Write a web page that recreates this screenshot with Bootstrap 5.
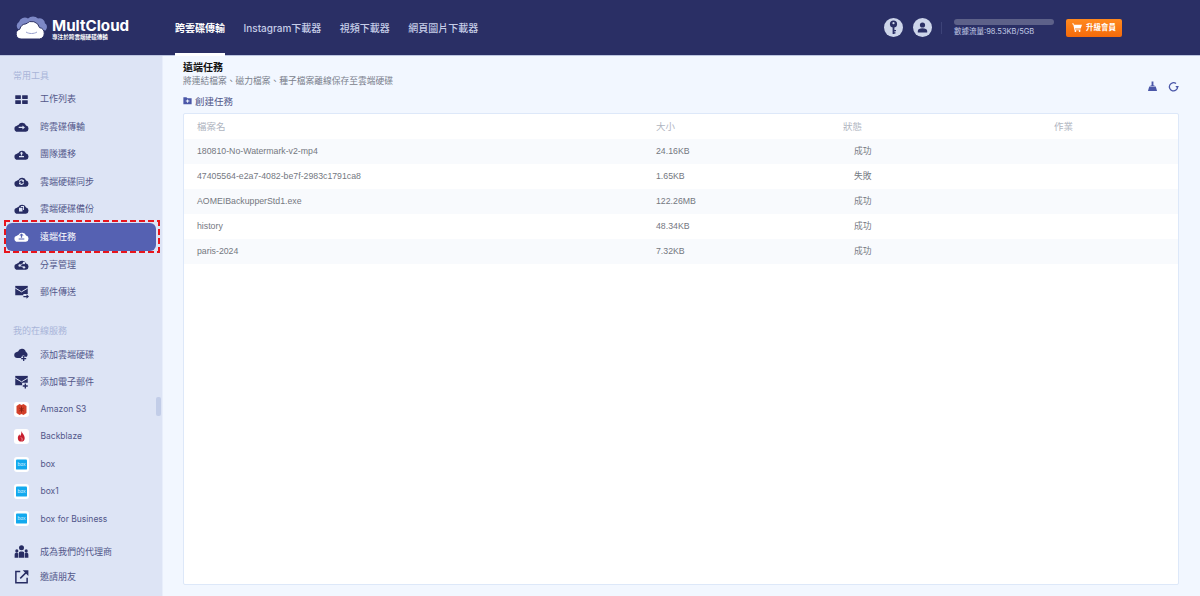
<!DOCTYPE html>
<html lang="zh-Hant">
<head>
<meta charset="utf-8">
<title>MultCloud</title>
<link href="https://cdn.jsdelivr.net/npm/bootstrap@5.3.0/dist/css/bootstrap.min.css" rel="stylesheet">
<style>
html,body{height:596px;overflow:hidden}
body{font-family:"Liberation Sans","Noto Sans CJK TC",sans-serif;font-size:9px;background:#f2f7ff;color:#555}
.mc-top{height:56px;background:#2a2f65;border-bottom:1px solid #bcc5e0;padding-left:15px}
.mc-logo{width:160px;gap:4px}
.mc-word{font-family:Inter,"Noto Sans CJK TC",sans-serif;font-weight:700;font-size:15.2px;line-height:17px;color:#fff;margin-top:1px}
.mc-sub{font-size:5.6px;line-height:6px;color:#fff;font-weight:700}
.mc-nav{gap:18.5px;height:56px;align-self:flex-start}
.mc-nav a{font-family:Inter,"Noto Sans CJK TC",sans-serif;font-size:10px;color:#c6cde8;text-decoration:none;height:56px;line-height:56px;font-weight:500;display:block}
.mc-nav a.cur{color:#fff;font-weight:700;border-bottom:3px solid #fff}
.mc-right{margin-left:auto;padding-right:78px;gap:0}
.mc-round{width:19px;height:19px;border-radius:50%;background:#cdd5ea;margin-right:10px;flex:none}
.mc-round.mc-r2{margin-right:9px}
.mc-sep{width:1px;height:12px;background:#3d4378;margin:0 12px 0 0}
.mc-track{width:100px;height:6px;border-radius:3px;background:#5d6189;margin-bottom:2px}
.mc-flow{font-family:Inter,"Noto Sans CJK TC",sans-serif;font-size:7.5px;line-height:10px;color:#c2cbe6;white-space:nowrap}
.mc-up{width:56px;height:18px;margin-left:12px;border-radius:2px;background:linear-gradient(#ff8a1f,#f56a0a);color:#fff;font-size:7.5px;font-weight:700;gap:4px;border:0;padding:0}
.mc-body{height:540px}
.mc-side{width:163px;flex:none;background:#dde4f5;position:relative;border-right:1px solid #e8eefb;padding-top:14px}
.mc-label{font-family:Inter,"Noto Sans CJK TC",sans-serif;font-size:9px;line-height:12px;color:#a9b5d9;padding-left:13px}
.mc-label.mc-l1{margin-bottom:3.5px}
.mc-label.mc-l2{margin-top:19px;margin-bottom:4px}
.mc-item{height:27.45px;padding-left:13.5px;color:#52578a;font-family:Inter,"Noto Sans CJK TC",sans-serif;font-size:9px;text-decoration:none}
.mc-item svg{flex:none;width:15px;height:15px;margin-right:11.5px;color:#272c63}
.mc-item.act{position:relative;margin:0 6px;padding-left:7.5px;background:#5561b2;color:#fff;border-radius:6px;height:28px}
.mc-item.act svg{color:#fff}
.mc-item.act::before{content:"";position:absolute;left:-2px;right:-4px;top:-3px;bottom:-2px;background:repeating-linear-gradient(90deg,#e8141c 0 6px,transparent 6px 9px) left top/100% 2px no-repeat,repeating-linear-gradient(90deg,#e8141c 0 6px,transparent 6px 9px) left bottom/100% 2px no-repeat,repeating-linear-gradient(0deg,#e8141c 0 6px,transparent 6px 9px) left top/2px 100% no-repeat,repeating-linear-gradient(0deg,#e8141c 0 6px,transparent 6px 9px) right top/2px 100% no-repeat}
.mc-item.mc-lat{font-size:8.5px}
.mc-item.mc-gap{margin-top:5px}
.mc-item.mc-last{height:22.6px}
.mc-tile{width:15px;height:15px;border-radius:3px;background:#fff;margin-right:12px;flex:none}
.mc-tile svg{width:11px;height:11px;margin:0;color:inherit}
.mc-tile svg.mc-tall{width:11px;height:13px}
.mc-thumb{position:absolute;left:156px;top:341px;width:5px;height:19px;border-radius:2px;background:#c2cde8}
.mc-main{padding:0 21px 12px 20px;min-width:0}
.mc-h{font-weight:700;font-size:10px;line-height:12px;color:#111;padding-top:6px}
.mc-desc{font-size:8.75px;line-height:11px;color:#7a7f8c;margin-top:2px}
.mc-create{font-size:9.5px;line-height:14px;color:#52578a;margin-top:8px;height:18px;text-decoration:none}
.mc-create svg{width:9px;height:9px;color:#4b57a8;margin-right:3px;margin-top:-3px}
.mc-tools{top:81px;right:21px;gap:10px}
.mc-tools svg{width:11px;height:11px;color:#4b57a8}
.mc-panel{height:472px;background:#fff;border:1px solid #dde8f9;border-radius:2px}
.mc-tbl{--bs-table-bg:transparent;--bs-table-striped-bg:#f8fafd;--bs-table-accent-bg:transparent;--bs-table-striped-color:#74787f;color:#74787f;table-layout:fixed;margin:0;font-size:8.75px}
.mc-tbl th,.mc-tbl td{height:25px;padding:0 0 0 13px;vertical-align:middle;border:0;font-weight:400;line-height:25px;color:#74787f}
.mc-tbl th{color:#b0b5bf;font-size:9.5px}
.mc-tbl .mc-st{padding-left:24px}
</style>
</head>
<body>
<svg width="0" height="0" class="d-block position-absolute">
<defs>
<path id="cl" d="M5.500 20.500a5 5 0 0 1-.8-9.900 5 5 0 0 1 2.300-1A6.800 6.800 0 0 1 19.300 10.500a5.100 5.100 0 0 1-.3 10z"/>
<symbol id="i-grid" viewBox="0 0 24 24"><rect x="2" y="5" width="9" height="6" rx=".6" fill="currentColor"/><rect x="13" y="5" width="9" height="6" rx=".6" fill="currentColor"/><rect x="2" y="13" width="9" height="6" rx=".6" fill="currentColor"/><rect x="13" y="13" width="9" height="6" rx=".6" fill="currentColor"/></symbol>
<symbol id="i-xfer" viewBox="0 0 24 24"><use href="#cl" fill="currentColor"/><path d="M7.500 12.500h6v-2.300l4 3.300-4 3.300v-2.300h-6z" fill="#dde4f5"/></symbol>
<symbol id="i-mig" viewBox="0 0 24 24"><use href="#cl" fill="currentColor"/><path d="M12 7.500l3 3h-2v3h-2v-3H9zM8 14.500h8v1.800H8z" fill="#dde4f5"/></symbol>
<symbol id="i-sync" viewBox="0 0 24 24"><use href="#cl" fill="currentColor"/><path d="M8 12.500a4 4 0 0 1 7-2.500l1-1v3.500h-3.500l1.200-1.200A2.400 2.400 0 0 0 9.500 12.500zM16 13.500a4 4 0 0 1-7 2.500l-1 1v-3.500h3.500l-1.200 1.200a2.400 2.400 0 0 0 4.200-1.200z" fill="#dde4f5"/></symbol>
<symbol id="i-bak" viewBox="0 0 24 24"><use href="#cl" fill="currentColor"/><path d="M11 8h5v6.500h-1.500V9.500H11zM8 10.800h5.500v6H8z" fill="#dde4f5"/></symbol>
<symbol id="i-rem" viewBox="0 0 24 24"><use href="#cl" fill="currentColor"/><path d="M12 7l3.500 3.500H13V14h-2v-3.500H8.500zM7.500 15h9v1.800h-9z" fill="#5561b2"/></symbol>
<symbol id="i-share" viewBox="0 0 24 24"><use href="#cl" fill="currentColor"/><circle cx="16" cy="9.500" r="1.900" fill="#dde4f5"/><circle cx="9" cy="13.500" r="1.900" fill="#dde4f5"/><circle cx="16" cy="16.500" r="1.900" fill="#dde4f5"/><path d="M16 9.500l-7 4 7 3" stroke="#dde4f5" stroke-width="1.100" fill="none"/></symbol>
<symbol id="i-mail" viewBox="0 0 24 24"><rect x="2" y="3" width="20" height="15" fill="currentColor"/><path d="M2 6.500l10 6 10-6" fill="none" stroke="#dde4f5" stroke-width="1.600"/><path d="M15 16h9v8h-9z" fill="#dde4f5"/><path d="M15 19h5v-2.500l4 3.500-4 3.500V21h-5z" fill="currentColor"/></symbol>
<symbol id="i-addc" viewBox="0 0 24 24"><path d="M5 17.500a4.800 4.800 0 0 1-.8-9.500 5 5 0 0 1 2.300-1A6.500 6.500 0 0 1 19 8a4.900 4.900 0 0 1 1.500 7.500h-4v-2h-3v2h-2v2z" fill="currentColor"/><path d="M14.500 14.500h2v3h3v2h-3v3h-2v-3h-3v-2h3z" fill="currentColor"/></symbol>
<symbol id="i-addm" viewBox="0 0 24 24"><rect x="2" y="3" width="20" height="15" fill="currentColor"/><path d="M2 6.500l10 6 10-6" fill="none" stroke="#dde4f5" stroke-width="1.600"/><path d="M13 14h11v10H13z" fill="#dde4f5"/><path d="M17 15h2.200v3H22v2.200h-2.800V23H17v-2.800h-3V18h3z" fill="currentColor"/></symbol>
<symbol id="i-agent" viewBox="0 0 24 24"><circle cx="12" cy="6" r="4" fill="currentColor"/><path d="M7.500 22v-7a3 3 0 0 1 3-3h3a3 3 0 0 1 3 3v7z" fill="currentColor"/><circle cx="4.500" cy="11" r="2.500" fill="currentColor"/><path d="M1 22v-5a3 3 0 0 1 5.500-2v7z" fill="currentColor"/><circle cx="19.500" cy="11" r="2.500" fill="currentColor"/><path d="M23 22v-5a3 3 0 0 0-5.500-2v7z" fill="currentColor"/></symbol>
<symbol id="i-inv" viewBox="0 0 24 24"><path d="M10 4H3v18h18v-8" fill="none" stroke="currentColor" stroke-width="2.400"/><path d="M10 15L20 5" stroke="currentColor" stroke-width="2.400"/><path d="M14 2h9v9z" fill="currentColor"/></symbol>
<symbol id="i-box" viewBox="0 0 24 24"><rect x="0" y="1" width="24" height="22" rx="2" fill="#12a9ee"/><text x="12" y="16" text-anchor="middle" font-family="Liberation Sans" font-size="11" fill="#dff3ff">box</text></symbol>
</defs>
</svg>

<header class="mc-top d-flex align-items-center">
  <div class="mc-logo d-flex align-items-center">
    <svg width="33" height="24" viewBox="0 0 33 24">
      <path d="M3 13a4.500 4.500 0 0 1 1-7 6 6 0 0 1 9-3.500 7 7 0 0 1 10 0 5.500 5.500 0 0 1 7 5c2.500 1 2.500 5 .5 7z" fill="#7d88c6"/>
      <path d="M6 23a5 5 0 0 1-1.200-9.800 7 7 0 0 1 6.200-5.400 8 8 0 0 1 13.500 3.800A5.800 5.800 0 0 1 24.500 23z" fill="#fff" stroke="#2a2f65" stroke-width="1"/>
      <path d="M11 16c3 2 8 2 11 0" stroke="#9aa2cf" stroke-width="1" fill="none"/>
    </svg>
    <div>
      <div class="mc-word">MultCloud</div>
      <div class="mc-sub">專注於跨雲端硬碟傳輸</div>
    </div>
  </div>
  <nav class="mc-nav d-flex">
    <a class="cur" href="#">跨雲碟傳輸</a>
    <a href="#">Instagram下載器</a>
    <a href="#">視頻下載器</a>
    <a href="#">網頁圖片下載器</a>
  </nav>
  <div class="mc-right d-flex align-items-center">
    <span class="mc-round d-flex align-items-center justify-content-center">
      <svg width="9" height="15" viewBox="0 0 9 15"><circle cx="4.500" cy="4" r="3.600" fill="#2a2f65"/><circle cx="4.500" cy="3.200" r="1.100" fill="#cdd5ea"/><path d="M3.600 7h1.800v7H3.600z" fill="#2a2f65"/><path d="M5 10h2v1.300H5zM5 12.200h1.500v1.300H5z" fill="#2a2f65"/></svg>
    </span>
    <span class="mc-round mc-r2 d-flex align-items-center justify-content-center">
      <svg width="11" height="11" viewBox="0 0 11 11"><circle cx="5.500" cy="3" r="2.600" fill="#2a2f65"/><path d="M.8 10.500V9c0-1.800 2-2.800 4.700-2.800s4.700 1 4.700 2.800v1.500z" fill="#2a2f65"/></svg>
    </span>
    <span class="mc-sep"></span>
    <div>
      <div class="mc-track"></div>
      <div class="mc-flow">數據流量:98.53KB/5GB</div>
    </div>
    <button type="button" class="mc-up btn d-flex align-items-center justify-content-center">
      <svg width="10" height="9" viewBox="0 0 10 9"><path d="M0 .5h1.800l.4 1.200H10L8.700 5.600H3l.2.900h5.300v.8H2.500L1.200 1.300H0z" fill="#fff"/><circle cx="3.400" cy="8" r=".9" fill="#fff"/><circle cx="7.600" cy="8" r=".9" fill="#fff"/></svg>
      升級會員
    </button>
  </div>
</header>

<div class="mc-body d-flex">
  <aside class="mc-side">
    <div class="mc-label mc-l1">常用工具</div>
    <a class="mc-item d-flex align-items-center" href="#"><svg><use href="#i-grid"/></svg>工作列表</a>
    <a class="mc-item d-flex align-items-center" href="#"><svg><use href="#i-xfer"/></svg>跨雲碟傳輸</a>
    <a class="mc-item d-flex align-items-center" href="#"><svg><use href="#i-mig"/></svg>團隊遷移</a>
    <a class="mc-item d-flex align-items-center" href="#"><svg><use href="#i-sync"/></svg>雲端硬碟同步</a>
    <a class="mc-item d-flex align-items-center" href="#"><svg><use href="#i-bak"/></svg>雲端硬碟備份</a>
    <a class="mc-item act d-flex align-items-center" href="#"><svg><use href="#i-rem"/></svg>遠端任務</a>
    <a class="mc-item d-flex align-items-center" href="#"><svg><use href="#i-share"/></svg>分享管理</a>
    <a class="mc-item d-flex align-items-center" href="#"><svg><use href="#i-mail"/></svg>郵件傳送</a>
    <div class="mc-label mc-l2">我的在線服務</div>
    <a class="mc-item d-flex align-items-center" href="#"><svg><use href="#i-addc"/></svg>添加雲端硬碟</a>
    <a class="mc-item d-flex align-items-center" href="#"><svg><use href="#i-addm"/></svg>添加電子郵件</a>
    <a class="mc-item mc-lat d-flex align-items-center" href="#"><span class="mc-tile d-flex align-items-center justify-content-center"><svg class="mc-tall" viewBox="0 0 22 26"><path d="M1 6l6-4 4 2 4-2 6 4v14l-6 4-4-2-4 2-6-4z" fill="#d3402a"/><path d="M11 7v12M6.500 10l9 6M15.500 10l-9 6" stroke="#8a2012" stroke-width="1.800"/></svg></span>Amazon S3</a>
    <a class="mc-item mc-lat d-flex align-items-center" href="#"><span class="mc-tile d-flex align-items-center justify-content-center"><svg viewBox="0 0 24 24"><path d="M12 0c1 5 7 9 7 15a7.500 8 0 0 1-15 0c0-4 2-5 3-8 1 1.500 1.500 2.500 2 4 2-3 3-6 3-11z" fill="#c8202f"/><path d="M11 14c2 2 3 3 2 7" stroke="#fff" stroke-width="1.200" fill="none"/></svg></span>Backblaze</a>
    <a class="mc-item mc-lat d-flex align-items-center" href="#"><span class="mc-tile d-flex align-items-center justify-content-center"><svg><use href="#i-box"/></svg></span>box</a>
    <a class="mc-item mc-lat d-flex align-items-center" href="#"><span class="mc-tile d-flex align-items-center justify-content-center"><svg><use href="#i-box"/></svg></span>box1</a>
    <a class="mc-item mc-lat d-flex align-items-center" href="#"><span class="mc-tile d-flex align-items-center justify-content-center"><svg><use href="#i-box"/></svg></span>box for Business</a>
    <a class="mc-item mc-gap d-flex align-items-center" href="#"><svg><use href="#i-agent"/></svg>成為我們的代理商</a>
    <a class="mc-item mc-last d-flex align-items-center" href="#"><svg><use href="#i-inv"/></svg>邀請朋友</a>
    <div class="mc-thumb"></div>
  </aside>
  <main class="mc-main flex-grow-1">
    <div class="mc-h">遠端任務</div>
    <div class="mc-desc">將連結檔案、磁力檔案、種子檔案離線保存至雲端硬碟</div>
    <a class="mc-create d-block" href="#"><svg viewBox="0 0 24 24"><path d="M1 3h8l3 3h11v16H1z" fill="currentColor"/><path d="M11 9h2.500v3H17v2.500h-3.500V18H11v-3.500H7.500V12H11z" fill="#f2f7ff"/></svg>創建任務</a>
    <div class="mc-tools position-absolute d-flex align-items-center">
      <svg viewBox="0 0 24 24"><path d="M10 1h4v8l4 2H6l4-2z" fill="currentColor"/><path d="M5 12h14l3 10H2z" fill="currentColor"/></svg>
      <svg viewBox="0 0 24 24"><path d="M21 13a9 9 0 1 1-3.500-7.500" fill="none" stroke="currentColor" stroke-width="2.800"/><path d="M24 11h-8l4 5z" fill="currentColor"/></svg>
    </div>
    <div class="mc-panel">
      <table class="table table-striped mc-tbl">
        <colgroup><col style="width:459px"><col style="width:187px"><col style="width:211px"><col></colgroup>
        <thead><tr><th>檔案名</th><th>大小</th><th>狀態</th><th>作業</th></tr></thead>
        <tbody>
          <tr><td>180810-No-Watermark-v2-mp4</td><td>24.16KB</td><td class="mc-st">成功</td><td></td></tr>
          <tr><td>47405564-e2a7-4082-be7f-2983c1791ca8</td><td>1.65KB</td><td class="mc-st">失敗</td><td></td></tr>
          <tr><td>AOMEIBackupperStd1.exe</td><td>122.26MB</td><td class="mc-st">成功</td><td></td></tr>
          <tr><td>history</td><td>48.34KB</td><td class="mc-st">成功</td><td></td></tr>
          <tr><td>paris-2024</td><td>7.32KB</td><td class="mc-st">成功</td><td></td></tr>
        </tbody>
      </table>
    </div>
  </main>
</div>
<script src="https://cdn.jsdelivr.net/npm/bootstrap@5.3.0/dist/js/bootstrap.bundle.min.js"></script>
</body>
</html>
